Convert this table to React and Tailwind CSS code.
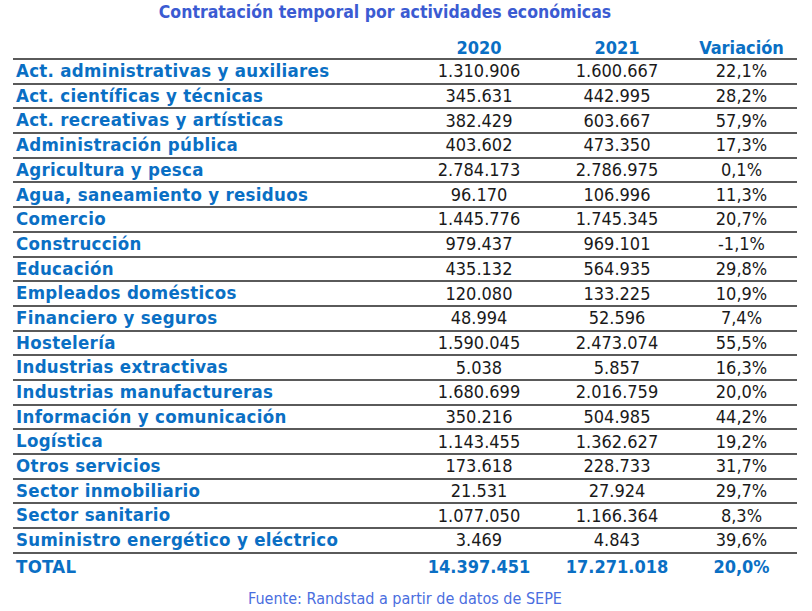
const rows = [
  ['Act. administrativas y auxiliares', '1.310.906', '1.600.667', '22,1%'],
  ['Act. científicas y técnicas', '345.631', '442.995', '28,2%'],
  ['Act. recreativas y artísticas', '382.429', '603.667', '57,9%'],
  ['Administración pública', '403.602', '473.350', '17,3%'],
  ['Agricultura y pesca', '2.784.173', '2.786.975', '0,1%'],
  ['Agua, saneamiento y residuos', '96.170', '106.996', '11,3%'],
  ['Comercio', '1.445.776', '1.745.345', '20,7%'],
  ['Construcción', '979.437', '969.101', '-1,1%'],
  ['Educación', '435.132', '564.935', '29,8%'],
  ['Empleados domésticos', '120.080', '133.225', '10,9%'],
  ['Financiero y seguros', '48.994', '52.596', '7,4%'],
  ['Hostelería', '1.590.045', '2.473.074', '55,5%'],
  ['Industrias extractivas', '5.038', '5.857', '16,3%'],
  ['Industrias manufactureras', '1.680.699', '2.016.759', '20,0%'],
  ['Información y comunicación', '350.216', '504.985', '44,2%'],
  ['Logística', '1.143.455', '1.362.627', '19,2%'],
  ['Otros servicios', '173.618', '228.733', '31,7%'],
  ['Sector inmobiliario', '21.531', '27.924', '29,7%'],
  ['Sector sanitario', '1.077.050', '1.166.364', '8,3%'],
  ['Suministro energético y eléctrico', '3.469', '4.843', '39,6%'],
];

const font = { fontFamily: '"DejaVu Sans Condensed", "Liberation Sans", sans-serif' };

const App = () => {
  return (
    <div className="w-[812px] h-[611px] bg-white pl-[13px] pr-[15px]" style={font}>
      {/* Title */}
      <div className="h-[25px] flex items-center justify-center pr-[40px] text-[17.5px] font-bold text-[#3b5bd2]">
        Contratación temporal por actividades económicas
      </div>

      {/* Header */}
      <div className="mt-[11px] h-[24px] flex items-center border-b-2 border-[#5a5a5a] text-[18px] font-bold text-[#0a6fc4]">
        <div className="w-[397px]"></div>
        <div className="w-[138px] text-center">2020</div>
        <div className="w-[138px] text-center">2021</div>
        <div className="flex-1 text-center">Variación</div>
      </div>

      {/* Rows */}
      {rows.map((r) => (
        <div key={r[0]} className="h-[24.7px] flex items-center border-b-2 border-[#5a5a5a] text-[18px] leading-none">
          <div className="w-[397px] pl-[3px] font-bold text-[18.5px] tracking-[0.3px] text-[#0a6fc4]">{r[0]}</div>
          <div className="w-[138px] text-center text-[#1a1a1a]">{r[1]}</div>
          <div className="w-[138px] text-center text-[#1a1a1a]">{r[2]}</div>
          <div className="flex-1 text-center text-[#1a1a1a]">{r[3]}</div>
        </div>
      ))}

      {/* Total */}
      <div className="h-[26px] flex items-center text-[18px] leading-none font-bold text-[#0a6fc4]">
        <div className="w-[397px] pl-[3px] text-[18.5px] tracking-[0.3px]">TOTAL</div>
        <div className="w-[138px] text-center">14.397.451</div>
        <div className="w-[138px] text-center">17.271.018</div>
        <div className="flex-1 text-center">20,0%</div>
      </div>

      {/* Footer */}
      <div className="mt-[7px] text-center text-[16px] text-[#4a6ee0]">
        Fuente: Randstad a partir de datos de SEPE
      </div>
    </div>
  );
};

export default App;
